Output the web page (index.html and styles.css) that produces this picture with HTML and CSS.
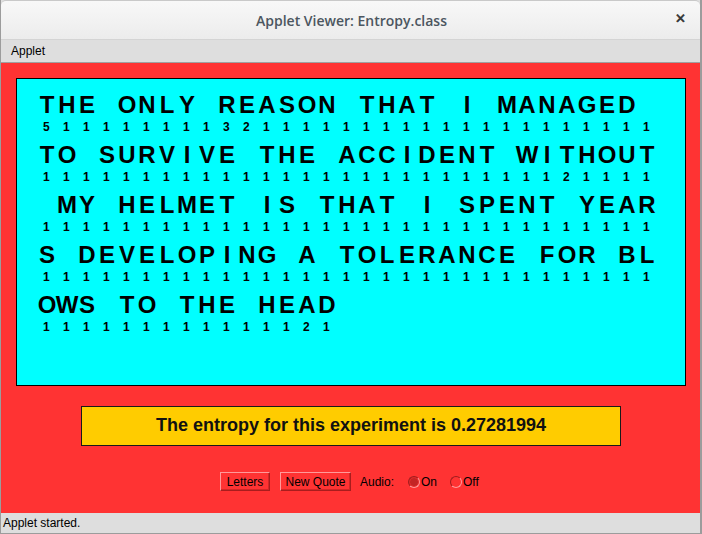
FILE: index.html
```html
<!DOCTYPE html>
<html>
<head>
<meta charset="utf-8">
<title>Applet Viewer: Entropy.class</title>
<link rel="stylesheet" href="styles.css">
</head>
<body>
<div class="window">
  <header class="titlebar">
    <span class="title">Applet Viewer: Entropy.class</span>
    <span class="close">&#x2715;</span>
  </header>
  <nav class="menubar"><span class="menu">Applet</span></nav>
  <main class="applet">
    <section class="board">
      <div class="line">
        <div class="letters"><span>T</span><span>H</span><span>E</span><span></span><span>O</span><span>N</span><span>L</span><span>Y</span><span></span><span>R</span><span>E</span><span>A</span><span>S</span><span>O</span><span>N</span><span></span><span>T</span><span>H</span><span>A</span><span>T</span><span></span><span>I</span><span></span><span>M</span><span>A</span><span>N</span><span>A</span><span>G</span><span>E</span><span>D</span><span></span></div>
        <div class="nums"><span>5</span><span>1</span><span>1</span><span>1</span><span>1</span><span>1</span><span>1</span><span>1</span><span>1</span><span>3</span><span>2</span><span>1</span><span>1</span><span>1</span><span>1</span><span>1</span><span>1</span><span>1</span><span>1</span><span>1</span><span>1</span><span>1</span><span>1</span><span>1</span><span>1</span><span>1</span><span>1</span><span>1</span><span>1</span><span>1</span><span>1</span></div>
      </div>
      <div class="line">
        <div class="letters"><span>T</span><span>O</span><span></span><span>S</span><span>U</span><span>R</span><span>V</span><span>I</span><span>V</span><span>E</span><span></span><span>T</span><span>H</span><span>E</span><span></span><span>A</span><span>C</span><span>C</span><span>I</span><span>D</span><span>E</span><span>N</span><span>T</span><span></span><span>W</span><span>I</span><span>T</span><span>H</span><span>O</span><span>U</span><span>T</span></div>
        <div class="nums"><span>1</span><span>1</span><span>1</span><span>1</span><span>1</span><span>1</span><span>1</span><span>1</span><span>1</span><span>1</span><span>1</span><span>1</span><span>1</span><span>1</span><span>1</span><span>1</span><span>1</span><span>1</span><span>1</span><span>1</span><span>1</span><span>1</span><span>1</span><span>1</span><span>1</span><span>1</span><span>2</span><span>1</span><span>1</span><span>1</span><span>1</span></div>
      </div>
      <div class="line">
        <div class="letters"><span></span><span>M</span><span>Y</span><span></span><span>H</span><span>E</span><span>L</span><span>M</span><span>E</span><span>T</span><span></span><span>I</span><span>S</span><span></span><span>T</span><span>H</span><span>A</span><span>T</span><span></span><span>I</span><span></span><span>S</span><span>P</span><span>E</span><span>N</span><span>T</span><span></span><span>Y</span><span>E</span><span>A</span><span>R</span></div>
        <div class="nums"><span>1</span><span>1</span><span>1</span><span>1</span><span>1</span><span>1</span><span>1</span><span>1</span><span>1</span><span>1</span><span>1</span><span>1</span><span>1</span><span>1</span><span>1</span><span>1</span><span>1</span><span>1</span><span>1</span><span>1</span><span>1</span><span>1</span><span>1</span><span>1</span><span>1</span><span>1</span><span>1</span><span>1</span><span>1</span><span>1</span><span>1</span></div>
      </div>
      <div class="line">
        <div class="letters"><span>S</span><span></span><span>D</span><span>E</span><span>V</span><span>E</span><span>L</span><span>O</span><span>P</span><span>I</span><span>N</span><span>G</span><span></span><span>A</span><span></span><span>T</span><span>O</span><span>L</span><span>E</span><span>R</span><span>A</span><span>N</span><span>C</span><span>E</span><span></span><span>F</span><span>O</span><span>R</span><span></span><span>B</span><span>L</span></div>
        <div class="nums"><span>1</span><span>1</span><span>1</span><span>1</span><span>1</span><span>1</span><span>1</span><span>1</span><span>1</span><span>1</span><span>1</span><span>1</span><span>1</span><span>1</span><span>1</span><span>1</span><span>1</span><span>1</span><span>1</span><span>1</span><span>1</span><span>1</span><span>1</span><span>1</span><span>1</span><span>1</span><span>1</span><span>1</span><span>1</span><span>1</span><span>1</span></div>
      </div>
      <div class="line">
        <div class="letters"><span>O</span><span>W</span><span>S</span><span></span><span>T</span><span>O</span><span></span><span>T</span><span>H</span><span>E</span><span></span><span>H</span><span>E</span><span>A</span><span>D</span></div>
        <div class="nums"><span>1</span><span>1</span><span>1</span><span>1</span><span>1</span><span>1</span><span>1</span><span>1</span><span>1</span><span>1</span><span>1</span><span>1</span><span>1</span><span>2</span><span>1</span></div>
      </div>
    </section>
    <div class="entropy">The entropy for this experiment is 0.27281994</div>
    <div class="controls">
      <button class="btn btn-letters">Letters</button>
      <button class="btn btn-quote">New Quote</button>
      <span class="audio-label">Audio:</span>
      <label class="radio radio-on"><span class="dot checked"></span>On</label>
      <label class="radio radio-off"><span class="dot"></span>Off</label>
    </div>
  </main>
  <footer class="status">Applet started.</footer>
</div>
</body>
</html>
```

FILE: styles.css
```css
* { box-sizing: border-box; }
html, body { margin: 0; padding: 0; }
body {
  width: 702px;
  height: 534px;
  overflow: hidden;
  background: #ffffff;
  font-family: "Liberation Sans", Arial, sans-serif;
}
.window {
  width: 702px;
  height: 534px;
  display: flex;
  flex-direction: column;
  border-left: 1px solid #9c9c9c;
  border-right: 2px solid #9c9c9c;
  background: #dedede;
}
.titlebar {
  height: 40px;
  flex: none;
  display: flex;
  align-items: center;
  justify-content: center;
  position: relative;
  background: linear-gradient(#f8f8f8, #ececec);
  border-top: 1px solid #c9c9c9;
  border-bottom: 1px solid #d4d4d4;
  border-radius: 5px 5px 0 0;
}
.title {
  font-family: "Open Sans", "DejaVu Sans", sans-serif;
  font-size: 14px;
  color: #4c5660;
  font-weight: 600;
  margin-left: 2px;
  margin-top: 1px;
}
.close {
  position: absolute;
  right: 14px;
  top: 10px;
  font-family: "DejaVu Sans", sans-serif;
  font-size: 13px;
  font-weight: bold;
  color: #333;
  -webkit-text-stroke: 0.6px #333;
}
.menubar {
  height: 23px;
  flex: none;
  background: #dedede;
  border-bottom: 1px solid #a0a0a0;
  display: flex;
  align-items: center;
  padding-left: 10px;
}
.menu {
  font-size: 12px;
  color: #000;
}
.applet {
  height: 450px;
  flex: none;
  background: #ff3333;
  padding-top: 15px;
}
.board {
  margin-left: 15px;
  width: 670px;
  height: 308px;
  background: #00ffff;
  border: 1px solid #000;
  padding-top: 11px;
  padding-left: 20px;
}
.line { margin-bottom: 6px; }
.letters {
  display: flex;
  height: 30px;
  line-height: 30px;
  font-size: 24px;
  font-weight: bold;
  color: #000;
}
.letters span {
  flex: none;
  width: 20px;
  display: flex;
  justify-content: center;
}
.nums {
  display: flex;
  height: 14px;
  line-height: 14px;
  font-size: 12px;
  font-weight: bold;
  color: #000;
  padding-left: 6px;
}
.nums span {
  flex: none;
  width: 20px;
}
.entropy {
  margin-top: 20px;
  margin-left: 80px;
  width: 540px;
  height: 40px;
  background: #ffcc00;
  border: 1px solid #1a1a1a;
  display: flex;
  align-items: center;
  justify-content: center;
  font-size: 18px;
  font-weight: bold;
  color: #111;
  padding-bottom: 2px;
}
.controls {
  margin-top: 26px;
  height: 19px;
  display: flex;
  align-items: center;
  padding-left: 219px;
  font-size: 12px;
  color: #000;
}
.btn {
  font-family: "Liberation Sans", Arial, sans-serif;
  font-size: 12px;
  color: #000;
  background: #ff3333;
  height: 19px;
  padding: 0;
  border: 1px solid;
  border-color: #ff9a9a #a81d1d #a81d1d #ff9a9a;
  box-shadow: inset -1px -1px 0 #d42626;
}
.btn-letters { width: 50px; }
.btn-quote { width: 71px; margin-left: 10px; }
.audio-label {
  margin-left: 9px;
  width: 48px;
}
.radio {
  display: flex;
  align-items: center;
  gap: 1px;
}
.radio-on { width: 42px; }
.dot {
  width: 12px;
  height: 12px;
  border-radius: 50%;
  border: 1px solid;
  border-color: #9e1e1e #ff9a9a #ff9a9a #9e1e1e;
  background: #ff3333;
}
.dot.checked {
  background: radial-gradient(circle, #c42424 0 3.5px, #e02a2a 4px);
}
.status {
  height: 21px;
  flex: none;
  background: #dedede;
  border-bottom: 1px solid #9c9c9c;
  font-size: 12px;
  color: #000;
  padding-left: 2px;
  display: flex;
  align-items: center;
}
```
